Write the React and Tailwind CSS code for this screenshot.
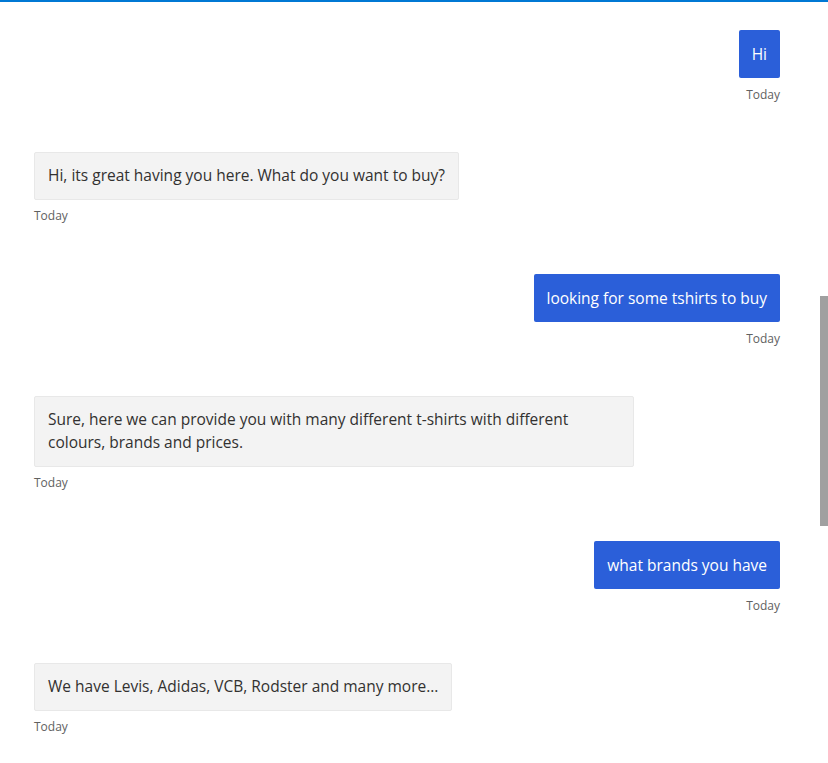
export default function App() {
  const msgs = [
    { me: true, text: "Hi" },
    { me: false, text: "Hi, its great having you here. What do you want to buy?" },
    { me: true, text: "looking for some tshirts to buy" },
    { me: false, text: "Sure, here we can provide you with many different t-shirts with different colours, brands and prices." },
    { me: true, text: "what brands you have" },
    { me: false, text: "We have Levis, Adidas, VCB, Rodster and many more..." },
  ];
  return (
    <div className="relative min-h-[763px] bg-white border-t-2 border-[#0078d4]" style={{ fontFamily: '"Open Sans", "Noto Sans", sans-serif' }}>
      <div className="flex flex-col pl-[34px] pr-[48px] pt-[28px]">
        {msgs.map((m, i) => (
          <div key={i} className={`flex flex-col ${m.me ? "items-end mb-[48.5px]" : "items-start mb-[50.5px]"}`}>
            <div
              className={`max-w-[600px] rounded-[2px] px-[13px] text-[15.5px] ${
                m.me
                  ? "bg-[#2b5fd9] text-white py-[13px] leading-[22px]"
                  : "bg-[#f3f3f3] text-[#323130] border border-[#e8e8e8] py-[11.5px] leading-[23px]"
              }`}
            >
              {m.text}
            </div>
            <div className={`${m.me ? "mt-[9px]" : "mt-[8px]"} text-[12px] leading-[16px] text-[#616161]`}>Today</div>
          </div>
        ))}
      </div>
      <div className="absolute right-0 top-[294px] w-[8px] h-[230px] bg-[#a0a0a0]" />
    </div>
  );
}
